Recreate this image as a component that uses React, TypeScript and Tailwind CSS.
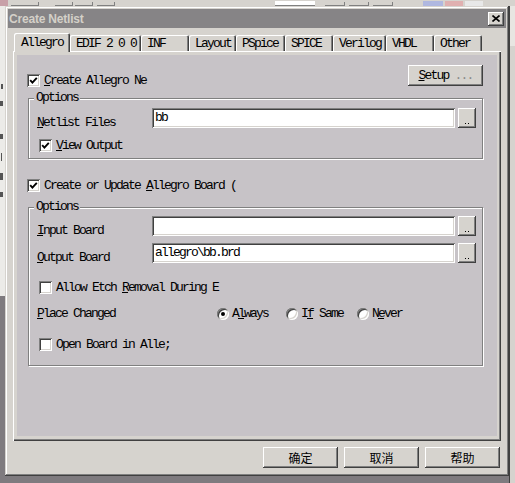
import React from 'react';

const raised =
  'shadow-[inset_-1px_-1px_0_#404040,inset_1px_1px_0_#ffffff,inset_-2px_-2px_0_#808080,inset_2px_2px_0_#d6d3ce]';
const sunken =
  'shadow-[inset_1px_1px_0_#808080,inset_-1px_-1px_0_#ffffff,inset_2px_2px_0_#404040,inset_-2px_-2px_0_#d6d3ce]';
const mono = "font-['Liberation_Mono',monospace] text-[13px] leading-[14px] tracking-[-1.8px] text-black";
const cjk = "font-['Noto_Sans_CJK_SC',sans-serif] text-[12px] leading-[14px] text-black";

function Check({ checked }: { checked?: boolean }) {
  return (
    <span className={`relative block w-[13px] h-[13px] bg-white shrink-0 ${sunken}`}>
      {checked && (
        <svg className="absolute left-0 top-0" width="13" height="13" viewBox="0 0 13 13">
          <path d="M3.2 6.2 L5.4 8.6 L9.8 3.8" fill="none" stroke="#000" strokeWidth="1.9" />
        </svg>
      )}
    </span>
  );
}

function Radio({ on }: { on?: boolean }) {
  return (
    <span className="relative block w-[12px] h-[12px] rounded-full bg-white shrink-0 shadow-[inset_1px_1px_0_#808080,inset_-1px_-1px_0_#ffffff,inset_2px_2px_0_#404040,inset_-2px_-2px_0_#d6d3ce]">
      {on && <span className="absolute left-[4px] top-[4px] w-[4px] h-[4px] rounded-full bg-black" />}
    </span>
  );
}

function CheckRow({ checked, children }: { checked?: boolean; children: React.ReactNode }) {
  return (
    <div className="flex items-center gap-[4px] h-[13px]">
      <Check checked={checked} />
      <div className={`${mono} whitespace-nowrap`}>{children}</div>
    </div>
  );
}

function DotsButton() {
  return (
    <div className={`w-[18px] h-[20px] bg-[#d6d3ce] flex items-end justify-center pb-[4px] ${raised}`}>
      <span className="block w-[1px] h-[1px] bg-black mr-[2px]" />
      <span className="block w-[1px] h-[1px] bg-black" />
    </div>
  );
}

function FieldRow({ label, value }: { label: React.ReactNode; value?: string }) {
  return (
    <div className="flex items-start h-[20px]">
      <div className={`${mono} w-[115px] mt-[8px] whitespace-nowrap`}>{label}</div>
      <div className={`w-[303px] h-[20px] bg-white pl-[3px] pt-[3px] ${sunken} ${mono}`}>{value}</div>
      <div className="ml-[3px]">
        <DotsButton />
      </div>
    </div>
  );
}

function Group({ height, children }: { height: string; children: React.ReactNode }) {
  return (
    <div
      className={`relative ml-[1px] ${height} border border-[#808080] shadow-[inset_1px_1px_0_#ffffff,1px_1px_0_#ffffff] pl-[8px]`}
    >
      <div className={`absolute left-[5px] top-[-8px] px-[2px] bg-[#c7c3c7] ${mono}`}>Options</div>
      {children}
    </div>
  );
}

const tabs = [
  { name: 'Allegro', w: 'w-[56px]' },
  { name: 'EDIF 2 0 0', w: 'w-[71px]' },
  { name: 'INF', w: 'w-[48px]' },
  { name: 'Layout', w: 'w-[47px]' },
  { name: 'PSpice', w: 'w-[49px]' },
  { name: 'SPICE', w: 'w-[48px]' },
  { name: 'Verilog', w: 'w-[53px]' },
  { name: 'VHDL', w: 'w-[48px]' },
  { name: 'Other', w: 'w-[48px]' },
];

function Tabs() {
  return (
    <div className="flex items-end h-[18px] pl-[1px] relative z-10">
      {tabs.map((t, i) =>
        i === 0 ? (
          <div
            key={t.name}
            className={`${t.w} h-[19px] -mb-[1px] bg-[#d6d3ce] rounded-t-[2px] pl-[7px] pt-[3px] shadow-[inset_1px_1px_0_#ffffff,inset_-1px_0_0_#404040,inset_-2px_0_0_#808080] ${mono}`}
          >
            {t.name}
          </div>
        ) : (
          <div
            key={t.name}
            className={`${t.w} h-[16px] bg-[#d6d3ce] rounded-t-[2px] pl-[6px] pt-[2px] shadow-[inset_1px_1px_0_#ffffff,inset_-1px_0_0_#404040,inset_-2px_0_0_#808080] ${mono}`}
          >
            {t.name}
          </div>
        )
      )}
    </div>
  );
}

function PushButton({ children, w }: { children: React.ReactNode; w: string }) {
  return (
    <div className={`${w} h-[21px] bg-[#d6d3ce] flex items-center justify-center ${raised}`}>{children}</div>
  );
}

export default function App() {
  return (
    <div className="w-[515px] h-[483px] overflow-hidden bg-[#7f7b7f] flex flex-col">
      {/* toolbar of the app behind */}
      <div className="h-[6px] bg-[#d6d3ce] flex items-end shrink-0">
        <div className="w-[8px] h-[6px] bg-[#c8a0a8]" />
        <div className="ml-[3px] w-[28px] h-[4px] border-b border-r border-[#808080]" />
        <div className="ml-[16px] w-[18px] h-[4px] border-b border-r border-[#808080]" />
        <div className="ml-[2px] w-[18px] h-[4px] border-b border-r border-[#808080]" />
        <div className="ml-[4px] w-[18px] h-[4px] border-b border-r border-[#808080]" />
        <div className="ml-[160px] w-[40px] h-[5px] bg-white border-b border-[#808080]" />
        <div className="ml-[10px] w-[20px] h-[4px] border-b border-r border-[#808080]" />
        <div className="ml-[4px] w-[20px] h-[4px] border-b border-r border-[#808080]" />
        <div className="ml-[4px] w-[20px] h-[4px] border-b border-r border-[#808080]" />
        <div className="ml-[30px] w-[20px] h-[5px] bg-[#b0b8e0]" />
        <div className="ml-[2px] w-[18px] h-[5px] bg-[#e0b0b0]" />
        <div className="ml-[2px] w-[18px] h-[5px] bg-[#e8e8e8]" />
      </div>

      <div className="flex flex-1">
        {/* left edge of the app behind */}
        <div className="w-[5px] flex flex-col shrink-0">
          <div className="h-[290px] bg-[#ecebe8] flex flex-col">
            <span className="mt-[78px] ml-[1px] w-[2px] h-[5px] bg-[#555]" />
            <span className="mt-[12px] w-[3px] h-[5px] bg-[#555]" />
            <span className="mt-[28px] w-[3px] h-[5px] bg-[#555]" />
            <span className="mt-[14px] ml-[1px] w-[1px] h-[8px] bg-[#555]" />
            <span className="mt-[12px] w-[3px] h-[7px] bg-[#555]" />
            <span className="mt-[12px] w-[3px] h-[5px] bg-[#555]" />
          </div>
          <div className="flex-1 bg-[#7f7b7f]" />
        </div>

        {/* dialog */}
        <div className="w-[504px] h-[470px] bg-[#d6d3ce] p-[3px] flex flex-col shrink-0 shadow-[inset_-1px_-1px_0_#404040,inset_1px_1px_0_#d6d3ce,inset_-2px_-2px_0_#808080,inset_2px_2px_0_#ffffff]">
          <div className="h-[19px] bg-[#868486] flex items-center justify-between pl-[1px] pr-[2px]">
            <span className="font-['Liberation_Sans',sans-serif] font-bold text-[12px] text-[#d4d0c8] tracking-[-0.2px]">
              Create Netlist
            </span>
            <div className={`w-[16px] h-[14px] bg-[#d6d3ce] flex items-center justify-center ${raised}`}>
              <svg width="8" height="7" viewBox="0 0 8 7">
                <path d="M0.5 0.5 L7.5 6.5 M7.5 0.5 L0.5 6.5" stroke="#000" strokeWidth="1.6" />
              </svg>
            </div>
          </div>

          <div className="pl-[5px] pt-[5px] flex flex-col">
            <Tabs />
            {/* tab control */}
            <div className="w-[488px] h-[390px] bg-[#d6d3ce] pl-[4px] pr-[4px] pt-[4px] pb-[5px] flex shadow-[inset_1px_1px_0_#ffffff,inset_-1px_-1px_0_#404040,inset_-2px_-2px_0_#808080]">
              <div className="flex-1 bg-[#c7c3c7] flex flex-col pl-[10px] pr-[14px] pt-[10px]">
                <div className="flex justify-between items-start h-[21px]">
                  <div className="mt-[9px]">
                    <CheckRow checked>
                      <u>C</u>reate Allegro Ne
                    </CheckRow>
                  </div>
                  <PushButton w="w-[75px]">
                    <span className={mono}>
                      <u>S</u>etup <span className="text-[#8a8a8a]">...</span>
                    </span>
                  </PushButton>
                </div>

                <div className="mt-[12px]">
                  <Group height="h-[61px]">
                    <div className="pt-[9px]">
                      <FieldRow
                        label={
                          <>
                            <u>N</u>etlist Files
                          </>
                        }
                        value="bb"
                      />
                    </div>
                    <div className="mt-[11px] ml-[2px]">
                      <CheckRow checked>
                        <u>V</u>iew Output
                      </CheckRow>
                    </div>
                  </Group>
                </div>

                <div className="mt-[20px]">
                  <CheckRow checked>
                    Create or Update <u>A</u>llegro Board (
                  </CheckRow>
                </div>

                <div className="mt-[15px]">
                  <Group height="h-[159px]">
                    <div className="pt-[8px]">
                      <FieldRow
                        label={
                          <>
                            <u>I</u>nput Board
                          </>
                        }
                      />
                    </div>
                    <div className="mt-[7px]">
                      <FieldRow
                        label={
                          <>
                            <u>O</u>utput Board
                          </>
                        }
                        value="allegro\bb.brd"
                      />
                    </div>
                    <div className="mt-[18px] ml-[2px]">
                      <CheckRow>
                        Allow Etch <u>R</u>emoval During E
                      </CheckRow>
                    </div>
                    <div className="mt-[13px] h-[14px] flex items-center">
                      <div className={`${mono} w-[180px]`}>
                        <u>P</u>lace Changed
                      </div>
                      <div className="w-[69px] flex items-center gap-[3px]">
                        <Radio on />
                        <span className={mono}>
                          A<u>l</u>ways
                        </span>
                      </div>
                      <div className="w-[71px] flex items-center gap-[3px]">
                        <Radio />
                        <span className={mono}>
                          I<u>f</u> Same
                        </span>
                      </div>
                      <div className="flex items-center gap-[3px]">
                        <Radio />
                        <span className={mono}>
                          N<u>e</u>ver
                        </span>
                      </div>
                    </div>
                    <div className="mt-[17px] ml-[2px]">
                      <CheckRow>Open Board in Alle;</CheckRow>
                    </div>
                  </Group>
                </div>
              </div>
            </div>

            <div className="mt-[6px] flex justify-end gap-[6px] pr-[1px] w-[488px]">
              <PushButton w="w-[75px]">
                <span className={cjk}>确定</span>
              </PushButton>
              <PushButton w="w-[75px]">
                <span className={cjk}>取消</span>
              </PushButton>
              <PushButton w="w-[75px]">
                <span className={cjk}>帮助</span>
              </PushButton>
            </div>
          </div>
        </div>

        {/* right edge of the app behind */}
        <div className="flex-1 flex flex-col">
          <div className="h-[40px] bg-[#e8e6e2] border-l border-[#404040]" />
          <div className="flex-1 bg-[#d6d3ce] border-l border-[#404040]" />
        </div>
      </div>
    </div>
  );
}
